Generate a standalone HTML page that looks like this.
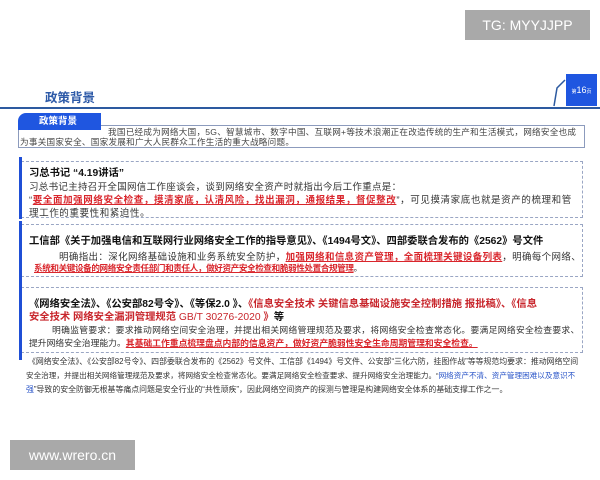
<!DOCTYPE html>
<html><head><meta charset="utf-8"><style>
*{margin:0;padding:0;box-sizing:border-box}
body{width:600px;height:480px;background:#fff;position:relative;overflow:hidden;font-family:"Liberation Sans","Noto Sans CJK SC",sans-serif;color:#333}
.a{position:absolute;white-space:nowrap}
.r{color:#d9262c;font-weight:bold;text-decoration:underline}
.rb{color:#c8262c}
.dash{position:absolute;border:1px dashed #9aa6c4}
.bar{position:absolute;width:3px;background:#1f4fd6}
.t{font-size:10.3px;font-weight:bold;color:#111}
.b{font-size:9.5px;color:#333}
</style></head><body>
<div class="a" style="left:465px;top:10px;width:125px;height:30px;background:#a9a9a9;color:#fff;font-size:14px;line-height:30px;text-align:center">TG: MYYJJPP</div>
<div class="a" style="left:45px;top:87px;font-size:12.5px;font-weight:bold;color:#2d5aa8">政策背景</div>
<div class="a" style="left:0;top:107px;width:600px;height:2px;background:#2d5aa0"></div>
<svg class="a" style="left:545px;top:78px" width="25" height="30"><path d="M20 2 L12 10 L9 28" stroke="#2d5aa0" stroke-width="1.5" fill="none"/></svg>
<div class="a" style="left:566px;top:74px;width:31px;height:32px;background:#1f56e0;color:#fff;font-size:9px;line-height:32px;text-align:center"><span style="font-size:5px">第</span>16<span style="font-size:5px">页</span></div>
<div class="a" style="left:18px;top:125px;width:567px;height:23px;border:1px solid #8c9bbd"></div>
<div class="a" style="left:18px;top:113px;width:83px;height:17px;background:#1f56e0;border-radius:8px 0 0 0;color:#fff;font-size:9.5px;font-weight:bold;line-height:17px;padding-left:21px">政策背景</div>
<div class="a" style="left:108px;top:126px;font-size:8.6px;letter-spacing:0.25px;color:#444">我国已经成为网络大国，5G、智慧城市、数字中国、互联网+等技术浪潮正在改造传统的生产和生活模式，网络安全也成</div>
<div class="a" style="left:20px;top:136px;font-size:8.6px;letter-spacing:0.25px;color:#444">为事关国家安全、国家发展和广大人民群众工作生活的重大战略问题。</div>

<div class="dash" style="left:21px;top:161px;width:562px;height:57px"></div>
<div class="bar" style="left:19px;top:157px;height:62px"></div>
<div class="a t" style="left:29px;top:164px">习总书记 “4.19讲话”</div>
<div class="a b" style="left:29px;top:179px;letter-spacing:0.3px">习总书记主持召开全国网信工作座谈会，谈到网络安全资产时就指出今后工作重点是：</div>
<div class="a b" style="left:29px;top:192px;letter-spacing:0.6px">“<span class="r">要全面加强网络安全检查，摸清家底，认清风险，找出漏洞，通报结果，督促整改</span>”，可见摸清家底也就是资产的梳理和管</div>
<div class="a b" style="left:29px;top:205px;letter-spacing:0.6px">理工作的重要性和紧迫性。</div>

<div class="dash" style="left:21px;top:224px;width:562px;height:53px"></div>
<div class="bar" style="left:19px;top:221px;height:62px"></div>
<div class="a t" style="left:29px;top:232px">工信部《关于加强电信和互联网行业网络安全工作的指导意见》、《1494号文》、四部委联合发布的《2562》号文件</div>
<div class="a b" style="left:59px;top:249px;letter-spacing:0.35px">明确指出：深化网络基础设施和业务系统安全防护，<span class="r">加强网络和信息资产管理，全面梳理关键设备列表</span>，明确每个网络、</div>
<div class="a b" style="left:34px;top:262px;font-size:8.6px;letter-spacing:-0.4px"><span class="r">系统和关键设备的网络安全责任部门和责任人，做好资产安全检查和脆弱性处置合规管理</span>。</div>

<div class="dash" style="left:21px;top:287px;width:562px;height:66px"></div>
<div class="bar" style="left:19px;top:283px;height:77px"></div>
<div class="a t" style="left:29px;top:295px">《网络安全法》、《公安部82号令》、《等保2.0 》、<span class="rb">《信息安全技术 关键信息基础设施安全控制措施 报批稿》、《信息</span></div>
<div class="a t" style="left:29px;top:308px"><span class="rb">安全技术 网络安全漏洞管理规范 <span style="font-weight:normal">GB/T 30276-2020</span> 》</span>等</div>
<div class="a b" style="left:52px;top:323px;font-size:8.8px;letter-spacing:0.3px">明确监管要求：要求推动网络空间安全治理，并提出相关网络管理规范及要求，将网络安全检查常态化。要满足网络安全检查要求、</div>
<div class="a b" style="left:29px;top:336px;font-size:8.8px">提升网络安全治理能力。<span class="r">其基础工作重点梳理盘点内部的信息资产，做好资产脆弱性安全生命周期管理和安全检查。</span></div>

<div class="a" style="left:28px;top:356px;font-size:7.9px;color:#333">《网络安全法》、《公安部82号令》、四部委联合发布的《2562》号文件、工信部《1494》号文件、公安部“三化六防，挂图作战”等等规范均要求：推动网络空间</div>
<div class="a" style="left:26px;top:370px;font-size:7.6px;color:#333">安全治理，并提出相关网络管理规范及要求，将网络安全检查常态化。要满足网络安全检查要求、提升网络安全治理能力。“<span style="color:#2a55c8">网络资产不清、资产管理困难以及意识不</span></div>
<div class="a" style="left:26px;top:384px;font-size:7.9px;color:#333"><span style="color:#2a55c8">强</span>”导致的安全防御无根基等痛点问题是安全行业的“共性顽疾”，因此网络空间资产的探测与管理是构建网络安全体系的基础支撑工作之一。</div>

<div class="a" style="left:10px;top:440px;width:125px;height:30px;background:#a9a9a9;color:#fff;font-size:14px;line-height:30px;text-align:center">www.wrero.cn</div>
</body></html>
